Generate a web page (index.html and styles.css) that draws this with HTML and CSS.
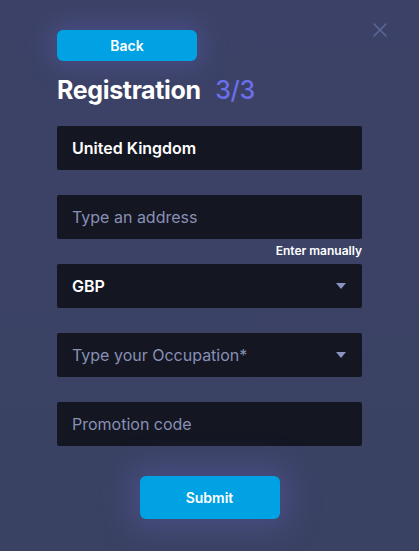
FILE: index.html
```html
<!DOCTYPE html>
<html lang="en">
<head>
  <meta charset="UTF-8">
  <meta name="viewport" content="width=device-width, initial-scale=1.0">
  <title>Registration</title>
  <link rel="stylesheet" href="styles.css">
</head>
<body>
  <div class="modal">
    <button class="close" aria-label="Close">
      <svg width="16" height="16" viewBox="0 0 16 16"><path d="M2 2L14 14M14 2L2 14" stroke="#5b6799" stroke-width="1.6" stroke-linecap="round"/></svg>
    </button>
    <div class="form">
      <button class="button back">Back</button>
      <h1>Registration <span class="step">3/3</span></h1>

      <div class="field value">United Kingdom</div>

      <div class="field-group">
        <div class="field placeholder">Type an address</div>
        <a href="#" class="manual">Enter manually</a>
      </div>

      <div class="field value select">GBP <span class="arrow"></span></div>

      <div class="field placeholder select">Type your Occupation* <span class="arrow"></span></div>

      <div class="field placeholder">Promotion code</div>

      <div class="actions">
        <button class="button submit">Submit</button>
      </div>
    </div>
  </div>
</body>
</html>
```

FILE: styles.css
```css
body {
  font-family: Inter, "Noto Sans", sans-serif;
  margin: 0;
  padding: 0;
  background-color: #3a4163;
  color: #fff;
}
.modal {
  width: 419px;
  height: 551px;
  box-sizing: border-box;
  padding: 30px 57px 0 57px;
  background: linear-gradient(180deg, #3c4267 0%, #3a4263 100%);
  position: relative;
}
.close {
  position: absolute;
  top: 22px;
  right: 31px;
  background: none;
  border: none;
  padding: 0;
  cursor: pointer;
}
.form {
  display: flex;
  flex-direction: column;
}
.button {
  font-family: Inter, "Noto Sans", sans-serif;
  background-color: #00a2e3;
  color: #fff;
  border: none;
  border-radius: 6px;
  font-weight: 600;
  font-size: 14px;
  cursor: pointer;
}
.back {
  width: 140px;
  height: 31px;
  box-shadow: 0 0 24px 6px rgba(96, 100, 190, 0.35);
}
h1 {
  margin: 13px 0 0 0;
  font-size: 25px;
  font-weight: 700;
  letter-spacing: -0.35px;
  line-height: 32px;
}
.step {
  color: #6b6ee9;
  font-weight: 500;
  margin-left: 9px;
}
.field {
  height: 44px;
  margin-top: 25px;
  background-color: #141622;
  border-radius: 2px;
  display: flex;
  align-items: center;
  padding: 0 16px 0 15px;
  font-size: 16px;
  box-sizing: border-box;
  justify-content: space-between;
}
.form > .field:first-of-type {
  margin-top: 20px;
}
.value {
  font-weight: 600;
  color: #fff;
}
.placeholder {
  color: #8890b5;
}
.field-group {
  display: flex;
  flex-direction: column;
}
.field-group .field {
  margin-top: 25px;
}
.manual {
  align-self: flex-end;
  color: #fff;
  font-size: 12px;
  font-weight: 600;
  text-decoration: none;
  line-height: 14px;
  margin-top: 5px;
  margin-bottom: -19px;
}
.arrow {
  width: 0;
  height: 0;
  border-left: 5px solid transparent;
  border-right: 5px solid transparent;
  border-top: 6px solid #8a93c2;
}
.actions {
  display: flex;
  justify-content: center;
  margin-top: 30px;
}
.submit {
  width: 140px;
  height: 43px;
  box-shadow: 0 0 30px 10px rgba(96, 100, 190, 0.35);
}
```
